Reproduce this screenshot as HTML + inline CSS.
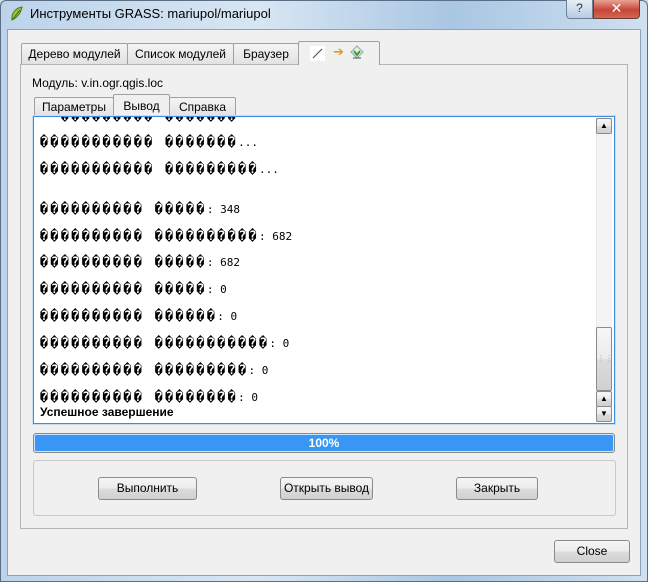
<!DOCTYPE html>
<html><head><meta charset="utf-8"><style>
*{box-sizing:border-box;margin:0;padding:0}
body{width:648px;height:582px;overflow:hidden;font-family:"Liberation Sans","DejaVu Sans",sans-serif;font-size:12px;color:#000;background:#c9dcef;position:relative}
.abs{position:absolute}
.frame{left:0;top:0;width:648px;height:582px;background:linear-gradient(90deg,#bcd3ea,#d8e6f3 40%,#a9c6e3 70%,#cfe0f0);border:1px solid #5a6f86;border-radius:6px 6px 0 0}
.client{left:7px;top:29px;width:634px;height:547px;background:#f0f0f0;border:1px solid #8ea3b9}
.tab{position:absolute;height:21px;background:linear-gradient(#f4f4f4,#e2e2e2);border:1px solid #a0a0a0;border-bottom:none;font-size:12px;line-height:20px;text-align:center;border-radius:2px 2px 0 0}
.pane{border:1px solid #b5b5b5;background:#f0f0f0}
.btn{position:absolute;height:23px;border:1px solid #8b8b8b;border-radius:3px;background:linear-gradient(#f6f6f6 0,#ebebeb 50%,#dcdcdc 51%,#d0d0d0);text-align:center;line-height:21px;font-size:12px}
.ln{position:absolute;left:6px;font-family:"DejaVu Sans Mono",monospace;font-size:13px;font-weight:bold;letter-spacing:2.6px;white-space:pre;line-height:14px}
.ln span{font-size:11px;letter-spacing:0;font-weight:normal}
</style></head><body>
<div class="abs frame"></div>
<svg class="abs" style="left:9px;top:5px" width="16" height="18" viewBox="0 0 16 18"><path d="M3 15 C2 9 6 3 13 2 C12 7 9 12 3 15Z" fill="#9bc23a" stroke="#4d7a12"/><path d="M4 14 L11 5" stroke="#3d6a10"/></svg>
<div class="abs" style="left:30px;top:6px;font-size:13px">Инструменты GRASS: mariupol/mariupol</div>
<div class="abs" style="left:566px;top:0;width:27px;height:19px;border:1px solid #6d7f93;border-top:none;border-radius:0 0 0 4px;background:linear-gradient(#e6eef7,#b8cce2);text-align:center;font-size:12px;color:#333;line-height:17px">?</div>
<div class="abs" style="left:593px;top:0;width:47px;height:19px;border:1px solid #6a3a34;border-top:none;border-radius:0 0 4px 0;background:linear-gradient(#e9a394,#c7453a 55%,#d06a52);text-align:center;color:#fff;font-weight:bold;font-size:14px;line-height:17px">✕</div>
<div class="abs client"></div>
<div class="tab" style="left:21px;top:43px;width:107px">Дерево модулей</div>
<div class="tab" style="left:127px;top:43px;width:107px">Список модулей</div>
<div class="tab" style="left:233px;top:43px;width:66px">Браузер</div>
<div class="abs pane" style="left:20px;top:64px;width:608px;height:465px"></div>
<div class="tab" style="left:298px;top:41px;width:82px;height:24px;background:#f0f0f0;border-color:#a0a0a0"></div>
<div class="abs" style="left:310px;top:46px;width:15px;height:15px;background:#fff"><svg width="15" height="15"><path d="M3 12 L12 3" stroke="#444"/></svg></div>
<div class="abs" style="left:333px;top:44px;color:#e39a1e;font-size:13px;font-weight:bold">➔</div>
<svg class="abs" style="left:350px;top:45px" width="14" height="15"><path d="M7 1 L13 7 L7 13 L1 7Z" fill="#e8f0e0" stroke="#8aa"/><path d="M4 6 L7 10 L10 6" stroke="#3a9a3a" fill="none" stroke-width="2"/><path d="M3 13 H11" stroke="#555"/></svg>
<div class="abs" style="left:32px;top:76px">Модуль: v.in.ogr.qgis.loc</div>
<div class="tab" style="left:34px;top:97px;width:80px;height:20px;line-height:19px">Параметры</div>
<div class="tab" style="left:169px;top:97px;width:67px;height:20px;line-height:19px">Справка</div>
<div class="tab" style="left:113px;top:94px;width:57px;height:23px;background:#f0f0f0;line-height:22px">Вывод</div>
<div class="abs" style="left:33px;top:116px;width:582px;height:308px;background:#fff;border:1px solid #3d8ee0;box-shadow:0 0 0 1px #c6dff5;overflow:hidden">
<div class="ln" style="top:-7px">- ��������� �������</div>
<div class="ln" style="top:19px">����������� �������<span>...</span></div>
<div class="ln" style="top:46px">����������� ���������<span>...</span></div>
<div class="ln" style="top:86px">���������� �����<span>: 348</span></div>
<div class="ln" style="top:113px">���������� ����������<span>: 682</span></div>
<div class="ln" style="top:139px">���������� �����<span>: 682</span></div>
<div class="ln" style="top:166px">���������� �����<span>: 0</span></div>
<div class="ln" style="top:193px">���������� ������<span>: 0</span></div>
<div class="ln" style="top:220px">���������� �����������<span>: 0</span></div>
<div class="ln" style="top:247px">���������� ���������<span>: 0</span></div>
<div class="ln" style="top:274px">���������� ��������<span>: 0</span></div>
<div class="abs" style="left:6px;top:288px;font-weight:bold;font-size:12px">Успешное завершение</div>
</div>
<div class="abs" style="left:596px;top:118px;width:16px;height:304px;background:#f4f4f4;border-left:1px dotted #ddd"></div>
<div class="btn" style="left:596px;top:118px;width:16px;height:16px;line-height:14px;font-size:8px;border-radius:2px">▲</div>
<div class="btn" style="left:596px;top:327px;width:16px;height:64px;border-radius:2px;color:#aaa;font-size:8px;line-height:62px">⋮⋮</div>
<div class="btn" style="left:596px;top:391px;width:16px;height:16px;line-height:14px;font-size:8px;border-radius:2px">▲</div>
<div class="btn" style="left:596px;top:406px;width:16px;height:16px;line-height:14px;font-size:8px;border-radius:2px">▼</div>
<div class="abs" style="left:33px;top:433px;width:582px;height:20px;border:1px solid #8a8a8a;border-radius:3px;background:#3a96f5;box-shadow:inset 0 0 0 1px #cfe6ff;color:#fff;font-weight:bold;text-align:center;line-height:18px;font-size:12px">100%</div>
<div class="abs" style="left:33px;top:460px;width:583px;height:56px;border:1px solid #c8c8c8;border-radius:3px"></div>
<div class="btn" style="left:98px;top:477px;width:99px">Выполнить</div>
<div class="btn" style="left:280px;top:477px;width:93px">Открыть вывод</div>
<div class="btn" style="left:456px;top:477px;width:82px">Закрыть</div>
<div class="btn" style="left:554px;top:540px;width:76px">Close</div>
</body></html>
